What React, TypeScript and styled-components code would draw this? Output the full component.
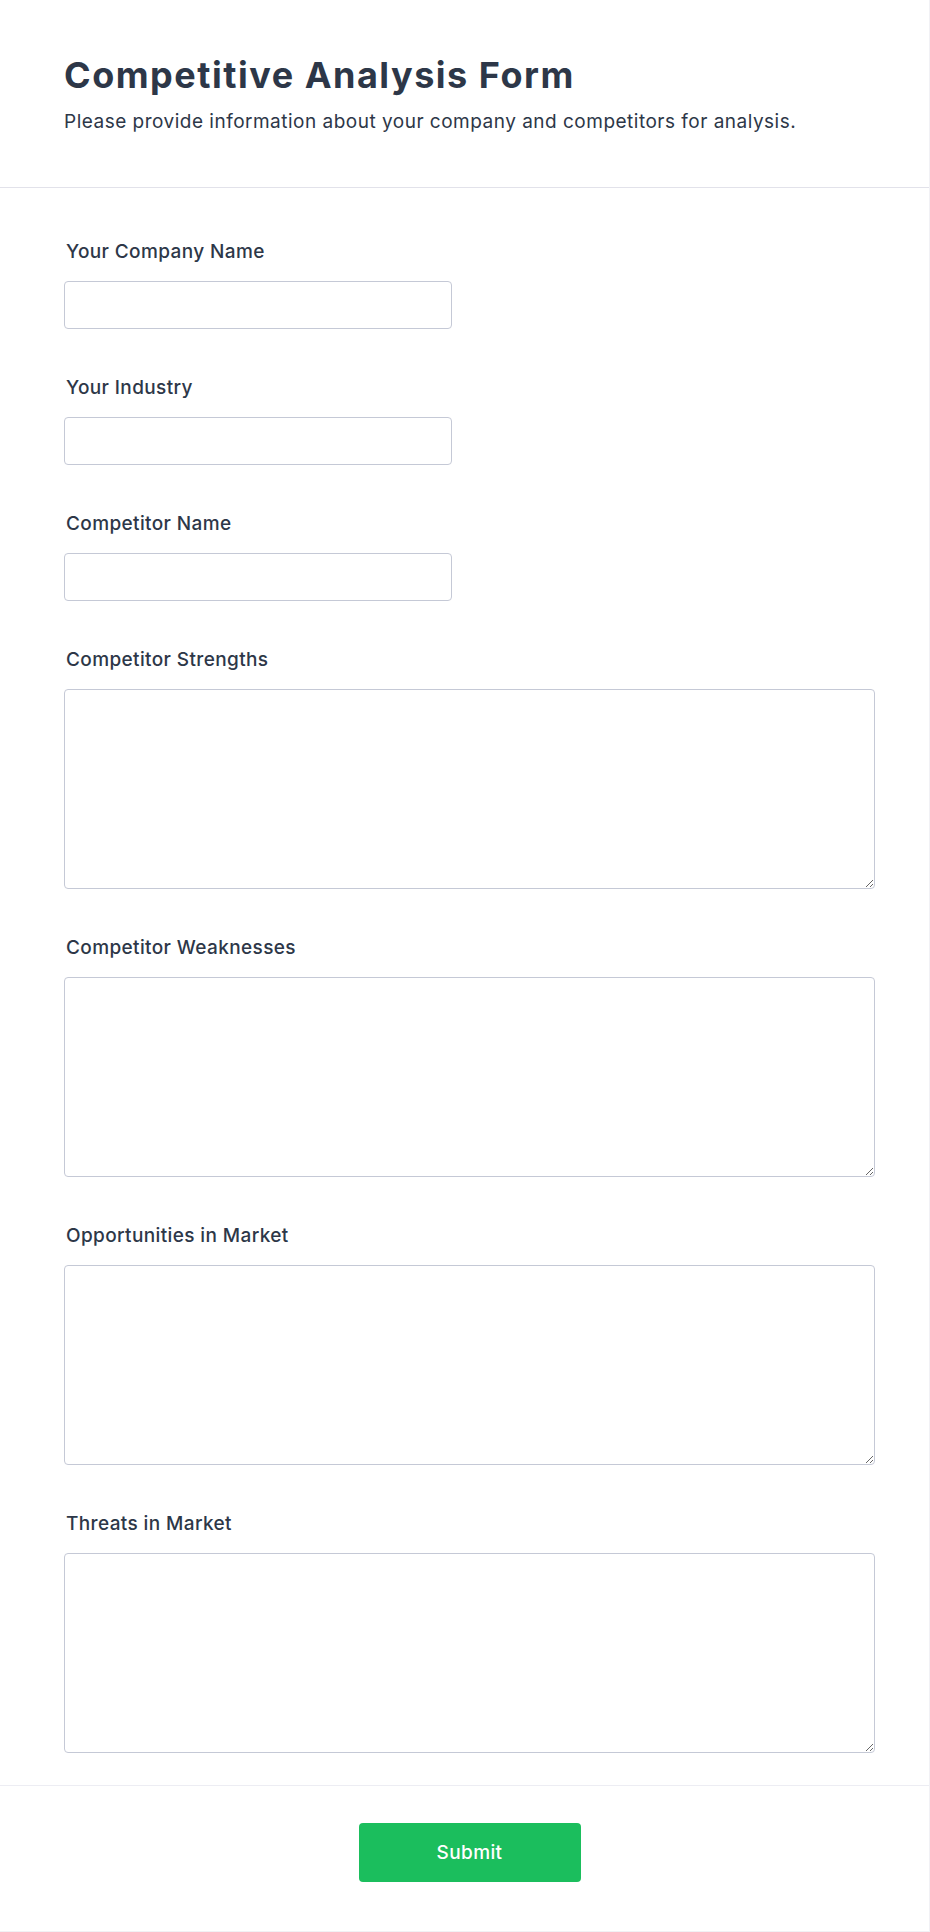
import React, { useState } from "react";
import styled, { createGlobalStyle } from "styled-components";

const GlobalStyle = createGlobalStyle`
  * {
    box-sizing: border-box;
  }

  body {
    margin: 0;
    background: #ffffff;
    font-family: Inter, "Noto Sans", sans-serif;
    color: #2d3748;
  }
`;

const Card = styled.div`
  width: 930px;
  min-height: 1932px;
  background: #ffffff;
  border-right: 1px solid #f1f1f5;
  border-bottom: 1px solid #f1f1f5;
`;

const Header = styled.header`
  padding: 55px 64px 51px;
  border-bottom: 1px solid #e2e2ea;
`;

const Title = styled.h1`
  margin: 0;
  font-size: 36px;
  line-height: 40px;
  font-weight: 700;
  letter-spacing: 0.042em;
  color: #2d3748;
`;

const Subtitle = styled.p`
  margin: 13px 0 0;
  font-size: 19px;
  line-height: 28px;
  font-weight: 400;
  letter-spacing: 0.026em;
  color: #2d3748;
`;

const Form = styled.form`
  display: flex;
  flex-direction: column;
  gap: 45px;
  padding: 50px 54px 32px 64px;
`;

const Field = styled.div`
  display: flex;
  flex-direction: column;
  gap: 15px;
`;

const Label = styled.label`
  padding-left: 2px;
  font-size: 19px;
  line-height: 28px;
  font-weight: 500;
  letter-spacing: 0.02em;
  color: #2d3748;
`;

const TextInput = styled.input`
  width: 388px;
  height: 48px;
  padding: 0 14px;
  border: 1px solid #c5c9d6;
  border-radius: 4px;
  font-family: inherit;
  font-size: 18px;
  color: #2d3748;
  background: #ffffff;
`;

const TextArea = styled.textarea`
  width: 100%;
  height: 200px;
  padding: 12px 14px;
  border: 1px solid #c5c9d6;
  border-radius: 4px;
  font-family: inherit;
  font-size: 18px;
  color: #2d3748;
  background: #ffffff;
`;

const Footer = styled.footer`
  display: flex;
  justify-content: center;
  padding: 37px 54px 49px 64px;
  border-top: 1px solid #ededf3;
`;

const SubmitButton = styled.button`
  width: 222px;
  height: 59px;
  border: 0;
  border-radius: 4px;
  background: #1bbe5d;
  color: #ffffff;
  font-family: inherit;
  font-size: 19px;
  font-weight: 500;
  letter-spacing: 0.02em;
  cursor: pointer;
`;

type FieldDef = { id: string; label: string; multiline?: boolean };

const fields: FieldDef[] = [
  { id: "company", label: "Your Company Name" },
  { id: "industry", label: "Your Industry" },
  { id: "competitor", label: "Competitor Name" },
  { id: "strengths", label: "Competitor Strengths", multiline: true },
  { id: "weaknesses", label: "Competitor Weaknesses", multiline: true },
  { id: "opportunities", label: "Opportunities in Market", multiline: true },
  { id: "threats", label: "Threats in Market", multiline: true },
];

const App: React.FC = function () {
  const [values, setValues] = useState<Record<string, string>>({});

  const handleChange =
    (id: string) =>
    (e: React.ChangeEvent<HTMLInputElement | HTMLTextAreaElement>) => {
      setValues({ ...values, [id]: e.target.value });
    };

  const handleSubmit = (e: React.FormEvent) => {
    e.preventDefault();
  };

  return (
    <>
      <GlobalStyle />
      <Card>
        <Header>
          <Title>Competitive Analysis Form</Title>
          <Subtitle>
            Please provide information about your company and competitors for
            analysis.
          </Subtitle>
        </Header>
        <Form id="analysis" onSubmit={handleSubmit}>
          {fields.map((f) => (
            <Field key={f.id}>
              <Label htmlFor={f.id}>{f.label}</Label>
              {f.multiline ? (
                <TextArea
                  id={f.id}
                  value={values[f.id] || ""}
                  onChange={handleChange(f.id)}
                />
              ) : (
                <TextInput
                  id={f.id}
                  type="text"
                  value={values[f.id] || ""}
                  onChange={handleChange(f.id)}
                />
              )}
            </Field>
          ))}
        </Form>
        <Footer>
          <SubmitButton type="submit" form="analysis">
            Submit
          </SubmitButton>
        </Footer>
      </Card>
    </>
  );
};

export default App;
